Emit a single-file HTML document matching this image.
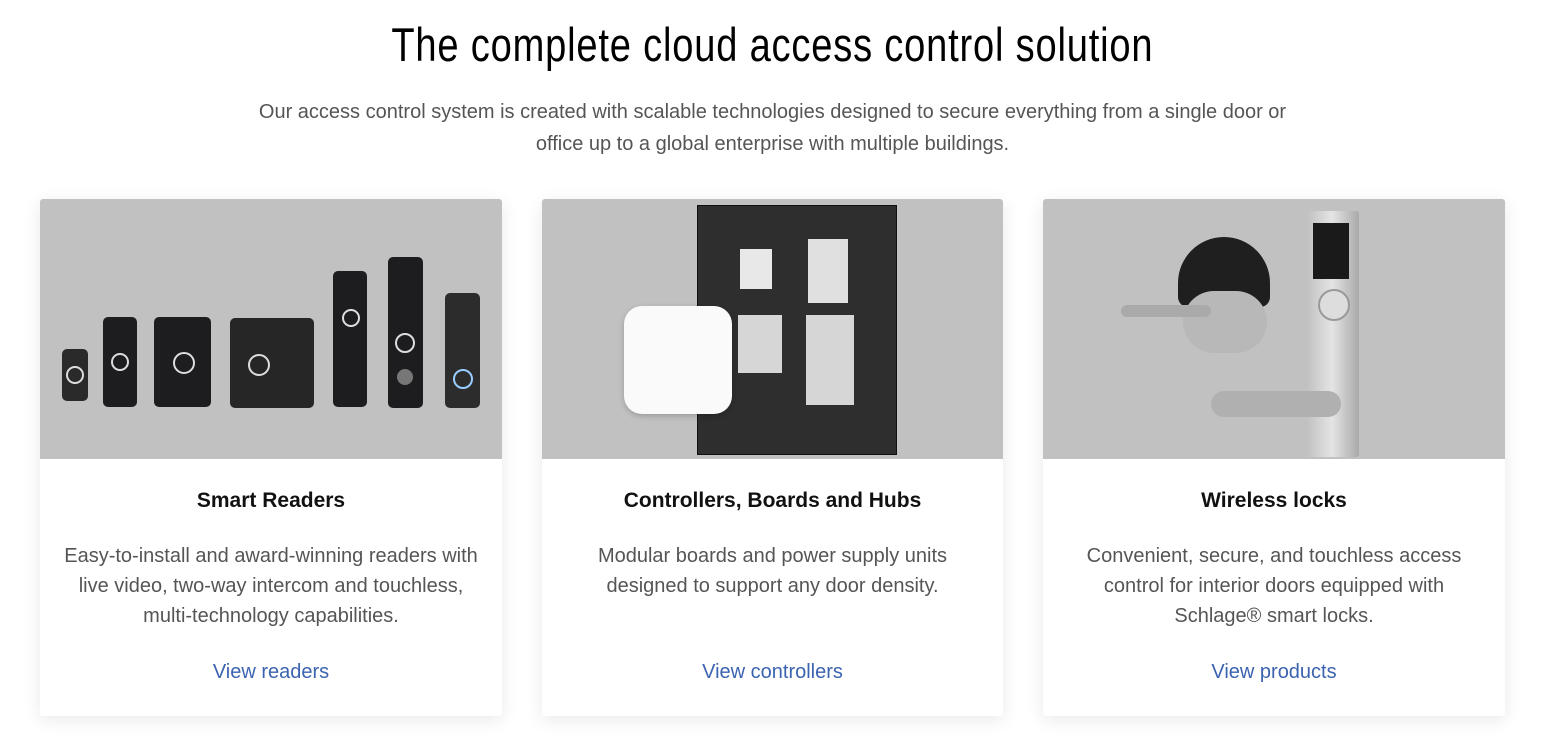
<!DOCTYPE html>
<html><head><style>
body{margin:0;background:#fff;font-family:"Liberation Sans",sans-serif;width:1545px;height:753px;overflow:hidden;position:relative}
h1{position:absolute;top:17px;left:0;width:1545px;text-align:center;margin:0;font-weight:400;font-size:47px;line-height:56px;color:#000}
h1 span{display:inline-block;transform:scaleX(.81);letter-spacing:1px;white-space:nowrap}
.sub{position:absolute;top:96px;left:0;width:1545px;text-align:center;font-size:20px;line-height:32px;color:#555}
.card{position:absolute;top:199px;width:462px;height:517px;background:#fff;box-shadow:0 4px 18px rgba(0,0,0,.09);border-radius:3px;overflow:hidden}
.img{position:absolute;top:0;left:0;width:100%;height:260px;background:#c1c1c1}
.t{position:absolute;top:290px;width:100%;text-align:center;font-weight:700;font-size:21px;color:#111}
.d{position:absolute;top:342px;left:18px;right:18px;text-align:center;font-size:20px;line-height:30px;color:#555}
.l{position:absolute;top:462px;width:100%;text-align:center;font-size:20px;color:#3b63b0}
.dev{position:absolute;background:#1d1d1f;border-radius:5px}
.ring{position:absolute;border:2px solid #ddd;border-radius:50%;width:14px;height:14px}
</style></head><body>
<h1><span>The complete cloud access control solution</span></h1>
<div class="sub">Our access control system is created with scalable technologies designed to secure everything from a single door or<br>office up to a global enterprise with multiple buildings.</div>

<div class="card" style="left:40px">
 <div class="img">
  <div class="dev" style="left:22px;top:150px;width:26px;height:52px;background:#2a2a2a"><div class="ring" style="left:4px;top:17px"></div></div>
  <div class="dev" style="left:63px;top:118px;width:34px;height:90px"><div class="ring" style="left:8px;top:36px"></div></div>
  <div class="dev" style="left:114px;top:118px;width:57px;height:90px"><div class="ring" style="left:19px;top:35px;width:18px;height:18px"></div></div>
  <div class="dev" style="left:190px;top:119px;width:84px;height:90px;background:#262626"><div class="ring" style="left:18px;top:36px;width:18px;height:18px"></div></div>
  <div class="dev" style="left:293px;top:72px;width:34px;height:136px"><div class="ring" style="left:9px;top:38px"></div></div>
  <div class="dev" style="left:348px;top:58px;width:35px;height:151px"><div class="ring" style="left:7px;top:76px;width:16px;height:16px"></div><div style="position:absolute;left:9px;top:112px;width:16px;height:16px;border-radius:50%;background:#777"></div></div>
  <div class="dev" style="left:405px;top:94px;width:35px;height:115px;background:#2c2c2c"><div class="ring" style="left:8px;top:76px;width:16px;height:16px;border-color:#9cf"></div></div>
 </div>
 <div class="t">Smart Readers</div>
 <div class="d">Easy-to-install and award-winning readers with live video, two-way intercom and touchless, multi-technology capabilities.</div>
 <div class="l">View readers</div>
</div>

<div class="card" style="left:542px;width:461px">
 <div class="img">
  <div style="position:absolute;left:155px;top:6px;width:198px;height:248px;background:#2e2e2e;border:1px solid #111"></div>
  <div style="position:absolute;left:198px;top:50px;width:32px;height:40px;background:#e8e8e8"></div>
  <div style="position:absolute;left:266px;top:40px;width:40px;height:64px;background:#e0e0e0"></div>
  <div style="position:absolute;left:196px;top:116px;width:44px;height:58px;background:#d6d6d6"></div>
  <div style="position:absolute;left:264px;top:116px;width:48px;height:90px;background:#d6d6d6"></div>
  <div style="position:absolute;left:82px;top:107px;width:108px;height:108px;background:#fafafa;border-radius:18px;box-shadow:0 2px 6px rgba(0,0,0,.2)"></div>
 </div>
 <div class="t">Controllers, Boards and Hubs</div>
 <div class="d">Modular boards and power supply units designed to support any door density.</div>
 <div class="l">View controllers</div>
</div>

<div class="card" style="left:1043px">
 <div class="img">
  <div style="position:absolute;left:262px;top:12px;width:54px;height:246px;background:linear-gradient(90deg,#bfbfbf,#e4e4e4,#a9a9a9);border-radius:3px"></div>
  <div style="position:absolute;left:270px;top:24px;width:36px;height:56px;background:#1a1a1a"></div>
  <div style="position:absolute;left:275px;top:90px;width:28px;height:28px;border-radius:50%;background:#ddd;border:2px solid #999"></div>
  <div style="position:absolute;left:135px;top:38px;width:92px;height:70px;background:#1f1f1f;border-radius:46px 46px 10px 10px"></div>
  <div style="position:absolute;left:140px;top:92px;width:84px;height:62px;background:#b8b8b8;border-radius:40px"></div>
  <div style="position:absolute;left:78px;top:106px;width:90px;height:12px;background:#aaa;border-radius:6px"></div>
  <div style="position:absolute;left:168px;top:192px;width:130px;height:26px;background:#b0b0b0;border-radius:14px"></div>
 </div>
 <div class="t">Wireless locks</div>
 <div class="d">Convenient, secure, and touchless access control for interior doors equipped with Schlage® smart locks.</div>
 <div class="l">View products</div>
</div>
</body></html>
